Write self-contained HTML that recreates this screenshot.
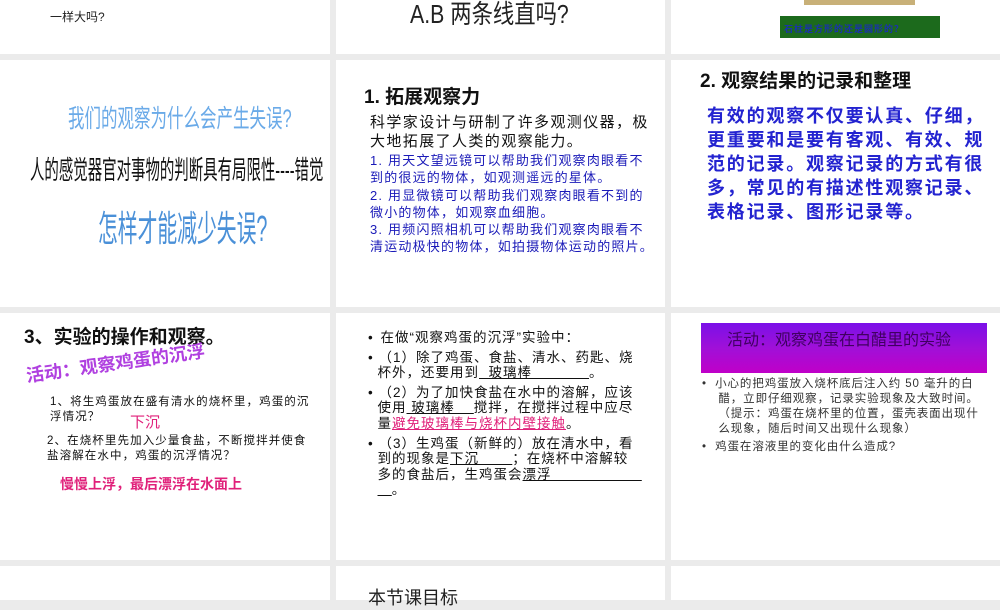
<!DOCTYPE html>
<html><head><meta charset="utf-8"><style>
body{margin:0;width:1000px;height:600px;background:#ebebeb;position:relative;overflow:hidden;font-family:"Liberation Sans","Noto Sans CJK SC",sans-serif;}
.s{position:absolute;background:#fff;overflow:hidden}
.t{position:absolute;white-space:nowrap}
.u{text-decoration:underline}
.nw{white-space:nowrap}
</style></head><body>
<div class="s" style="left:0;top:0;width:330px;height:54px"></div>
<div class="s" style="left:336px;top:0;width:329px;height:54px"></div>
<div class="s" style="left:671px;top:0;width:329px;height:54px"></div>
<div class="s" style="left:0;top:60px;width:330px;height:247px"></div>
<div class="s" style="left:336px;top:60px;width:329px;height:247px"></div>
<div class="s" style="left:671px;top:60px;width:329px;height:247px"></div>
<div class="s" style="left:0;top:313px;width:330px;height:247px"></div>
<div class="s" style="left:336px;top:313px;width:329px;height:247px"></div>
<div class="s" style="left:671px;top:313px;width:329px;height:247px"></div>
<div class="s" style="left:0;top:566px;width:330px;height:34px"></div>
<div class="s" style="left:336px;top:566px;width:329px;height:34px"></div>
<div class="s" style="left:671px;top:566px;width:329px;height:34px"></div>

<div class="t" style="left:50px;top:8px;font-size:12px;color:#222">一样大吗?</div>
<div class="t" style="left:410px;top:-6px;font-size:26px;color:#222;transform:scaleX(0.82);transform-origin:left">A.B 两条线直吗?</div>
<div style="position:absolute;left:804px;top:0;width:111px;height:5px;background:#c8b078"></div>
<div style="position:absolute;left:780px;top:16px;width:160px;height:22px;background:#1c6a1c;"></div>
<div class="t" style="left:784px;top:22px;font-size:9px;color:#1a30b0;font-weight:bold;letter-spacing:1px">石柱是方形的还是圆形的？</div>

<div class="t" style="left:68px;top:99px;font-size:25px;color:#6aaae8;transform:scaleX(0.66);transform-origin:left">我们的观察为什么会产生失误?</div>
<div class="t" style="left:30px;top:150px;font-size:26px;color:#111;transform:scaleX(0.555);transform-origin:left">人的感觉器官对事物的判断具有局限性----错觉</div>
<div class="t" style="left:98px;top:200px;font-size:36px;color:#4a90d8;transform:scaleX(0.55);transform-origin:left">怎样才能减少失误?</div>

<div class="t" style="left:364px;top:82px;font-size:19px;font-weight:bold;color:#111">1. 拓展观察力</div>
<div class="nw" style="position:absolute;left:370px;top:113px;font-size:15px;line-height:19px;color:#111;letter-spacing:1.4px">科学家设计与研制了许多观测仪器，极<br>大地拓展了人类的观察能力。</div>
<div class="nw" style="position:absolute;left:370px;top:152px;font-size:13px;line-height:17.3px;color:#1a1ab8;letter-spacing:1.2px">1. 用天文望远镜可以帮助我们观察肉眼看不<br>到的很远的物体，如观测遥远的星体。<br>2. 用显微镜可以帮助我们观察肉眼看不到的<br>微小的物体，如观察血细胞。<br>3. 用频闪照相机可以帮助我们观察肉眼看不<br>清运动极快的物体，如拍摄物体运动的照片。</div>

<div class="t" style="left:700px;top:66px;font-size:19px;font-weight:bold;color:#111">2. 观察结果的记录和整理</div>
<div class="nw" style="position:absolute;left:707px;top:104px;font-size:18px;line-height:24px;font-weight:bold;color:#2323d0;letter-spacing:1.8px">有效的观察不仅要认真、仔细，<br>更重要和是要有客观、有效、规<br>范的记录。观察记录的方式有很<br>多，常见的有描述性观察记录、<br>表格记录、图形记录等。</div>

<div class="t" style="left:24px;top:322px;font-size:19px;font-weight:bold;color:#111">3、实验的操作和观察。</div>
<div class="t" style="left:28px;top:362px;font-size:18px;font-weight:bold;color:#b040e0;transform:rotate(-8deg);transform-origin:left bottom">活动：观察鸡蛋的沉浮</div>
<div class="nw" style="position:absolute;left:50px;top:395px;font-size:11.5px;line-height:15px;color:#111;letter-spacing:1.1px">1、将生鸡蛋放在盛有清水的烧杯里，鸡蛋的沉<br>浮情况？</div>
<div class="t" style="left:130px;top:411px;font-size:15px;color:#e0207a">下沉</div>
<div class="nw" style="position:absolute;left:47px;top:434px;font-size:11.5px;line-height:15px;color:#111;letter-spacing:1.1px">2、在烧杯里先加入少量食盐，不断搅拌并使食<br>盐溶解在水中，鸡蛋的沉浮情况？</div>
<div class="t" style="left:60px;top:474px;font-size:14px;font-weight:bold;color:#e0207a">慢慢上浮，最后漂浮在水面上</div>

<div class="nw" style="position:absolute;left:368px;top:330px;font-size:13.5px;line-height:15.6px;color:#111;letter-spacing:1px">
<div>• <span style="margin-left:2px">在做“观察鸡蛋的沉浮”实验中：</span></div>
<div style="margin-top:4px">• （1）除了鸡蛋、食盐、清水、药匙、烧<br>&nbsp;&nbsp;杯外，还要用到<span class="u">&nbsp;&nbsp;玻璃棒&nbsp;&nbsp;&nbsp;&nbsp;&nbsp;&nbsp;&nbsp;&nbsp;&nbsp;&nbsp;&nbsp;&nbsp;</span>。</div>
<div style="margin-top:4px">• （2）为了加快食盐在水中的溶解，应该<br>&nbsp;&nbsp;使用<span class="u">&nbsp;玻璃棒&nbsp;&nbsp;&nbsp;&nbsp;</span>搅拌，在搅拌过程中应尽<br>&nbsp;&nbsp;量<span class="u" style="color:#e0207a">避免玻璃棒与烧杯内壁接触</span>。</div>
<div style="margin-top:4px">• （3）生鸡蛋（新鲜的）放在清水中，看<br>&nbsp;&nbsp;到的现象是<span class="u">下沉&nbsp;&nbsp;&nbsp;&nbsp;&nbsp;&nbsp;&nbsp;</span>；在烧杯中溶解较<br>&nbsp;&nbsp;多的食盐后，生鸡蛋会<span class="u">漂浮&nbsp;&nbsp;&nbsp;&nbsp;&nbsp;&nbsp;&nbsp;&nbsp;&nbsp;&nbsp;&nbsp;&nbsp;&nbsp;&nbsp;&nbsp;&nbsp;&nbsp;&nbsp;&nbsp;</span><br>&nbsp;&nbsp;<span class="u">&nbsp;&nbsp;&nbsp;</span>。</div>
</div>

<div style="position:absolute;left:701px;top:323px;width:286px;height:50px;background:linear-gradient(#7a10e8,#a010d8 50%,#c000c8)"></div>
<div class="t" style="left:727px;top:326px;font-size:16px;color:#400060">活动：观察鸡蛋在白醋里的实验</div>
<div class="nw" style="position:absolute;left:702px;top:377px;font-size:11.5px;line-height:15px;color:#333;letter-spacing:0.9px">
<div>•&nbsp; 小心的把鸡蛋放入烧杯底后注入约 50 毫升的白<br>&nbsp;&nbsp;&nbsp;&nbsp;醋，立即仔细观察，记录实验现象及大致时间。<br>&nbsp;&nbsp;&nbsp;&nbsp;（提示：鸡蛋在烧杯里的位置，蛋壳表面出现什<br>&nbsp;&nbsp;&nbsp;&nbsp;么现象，随后时间又出现什么现象）</div>
<div style="margin-top:3px">•&nbsp; 鸡蛋在溶液里的变化由什么造成?</div>
</div>

<div class="t" style="left:368px;top:584px;font-size:18px;color:#222">本节课目标</div>
</body></html>
